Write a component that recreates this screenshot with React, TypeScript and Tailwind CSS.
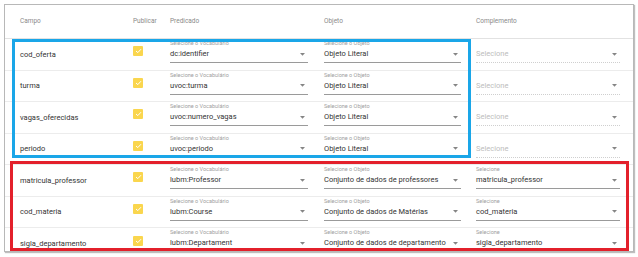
import React from "react";

type Row = {
  campo: string;
  pred: string;
  obj: string;
  comp?: string;
};

const rows: Row[] = [
  { campo: "cod_oferta", pred: "dc:identifier", obj: "Objeto Literal" },
  { campo: "turma", pred: "uvoc:turma", obj: "Objeto Literal" },
  { campo: "vagas_oferecidas", pred: "uvoc:numero_vagas", obj: "Objeto Literal" },
  { campo: "periodo", pred: "uvoc:periodo", obj: "Objeto Literal" },
  { campo: "matricula_professor", pred: "lubm:Professor", obj: "Conjunto de dados de professores", comp: "matricula_professor" },
  { campo: "cod_materia", pred: "lubm:Course", obj: "Conjunto de dados de Matérias", comp: "cod_materia" },
  { campo: "sigla_departamento", pred: "lubm:Departament", obj: "Conjunto de dados de departamento", comp: "sigla_departamento" },
];

function Arrow() {
  return (
    <svg width="5" height="3" viewBox="0 0 5 3" className="shrink-0 mr-[3px]">
      <path d="M0 0 L5 0 L2.5 2.8 Z" fill="#858585" />
    </svg>
  );
}

function Select({
  label,
  value,
  width,
  placeholder,
}: {
  label?: string;
  value: string;
  width: string;
  placeholder?: boolean;
}) {
  return (
    <div className={`flex flex-col pt-[1px] ${width}`}>
      <div className="h-[6px] text-[5.5px] leading-[6px] text-[#a0a0a0] whitespace-nowrap">{label ?? ""}</div>
      <div
        className={`h-[17px] flex items-center justify-between ${
          placeholder ? "border-b border-dotted border-[#cfcfcf]" : "border-b border-[#9a9a9a]"
        }`}
      >
        <span className={`text-[7.5px] whitespace-nowrap ${placeholder ? "text-[#bdbdbd]" : "text-[#333333]"}`}>{value}</span>
        <Arrow />
      </div>
    </div>
  );
}

function Check() {
  return (
    <div className="w-[10px] h-[10px] rounded-[1px] bg-[#fad64e] flex items-center justify-center -mt-[6px]">
      <svg width="7" height="6" viewBox="0 0 7 6">
        <path d="M1 3 L2.8 4.6 L6 1.2" stroke="#ffffff" strokeWidth="1" fill="none" />
      </svg>
    </div>
  );
}

export default function App() {
  return (
    <div className="w-[638px] h-[257px] bg-white relative" style={{ fontFamily: "Roboto, 'Liberation Sans', sans-serif" }}>
      <div className="absolute left-[4px] top-[4px] w-[630px] h-[248px] border border-[#b8b8b8] shadow-[1px_1px_1px_rgba(0,0,0,0.25)] bg-white overflow-hidden">
        {/* Header */}
        <div className="h-[34px] flex items-center border-b border-[#e2e2e2] text-[6.5px] text-[#8a8a8a] pl-[15px]">
          <div className="w-[113px]">Campo</div>
          <div className="w-[37px]">Publicar</div>
          <div className="w-[154px]">Predicado</div>
          <div className="w-[152px]">Objeto</div>
          <div>Complemento</div>
        </div>
        {rows.map((r, i) => (
          <div
            key={i}
            className={`h-[31.5px] flex items-start pl-[15px] ${i < rows.length - 1 ? "border-b border-[#ececec]" : ""}`}
          >
            <div className="w-[113px] h-full flex items-center text-[7.5px] text-[#333333]">{r.campo}</div>
            <div className="w-[37px] h-full flex items-center">
              <Check />
            </div>
            <div className="w-[154px]">
              <Select label="Selecione o Vocabulário" value={r.pred} width="w-[138px]" />
            </div>
            <div className="w-[152px]">
              <Select label="Selecione o Objeto" value={r.obj} width="w-[137px]" />
            </div>
            <div>
              {r.comp ? (
                <Select label="Selecione" value={r.comp} width="w-[144px]" />
              ) : (
                <Select value="Selecione" width="w-[144px]" placeholder />
              )}
            </div>
          </div>
        ))}
      </div>
      {/* annotation boxes */}
      <div className="absolute left-[12px] top-[39px] w-[459px] h-[119px] border-[3px] border-[#1aa6e8] pointer-events-none" />
      <div className="absolute left-[10px] top-[161px] w-[619px] h-[90px] border-[3px] border-[#e3202b] pointer-events-none" />
    </div>
  );
}
